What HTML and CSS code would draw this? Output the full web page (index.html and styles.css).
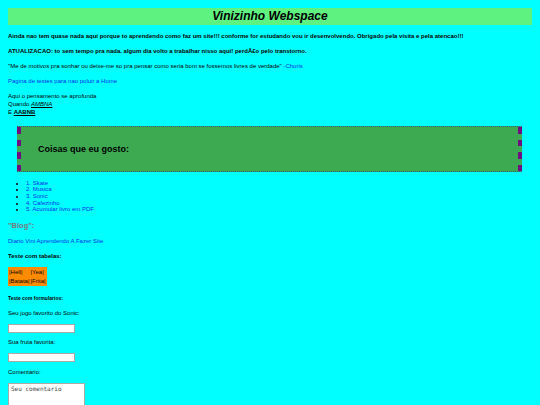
FILE: index.html
```html
<!DOCTYPE html>
<html>
<head>
<meta charset="utf-8">
<title>Vinizinho Webspace</title>
<link rel="stylesheet" href="styles.css">
</head>
<body>
<h1 class="title">Vinizinho Webspace</h1>
<p class="txt"><b>Ainda nao tem quase nada aqui porque to aprendendo como faz um site!!! conforme for estudando vou ir desenvolvendo. Obrigado pela visita e pela atencao!!!</b></p>
<p class="txt"><b>ATUALIZACAO: to sem tempo pra nada. algum dia volto a trabalhar nisso aqui! perdÃ£o pelo transtorno.</b></p>
<p class="txt">"Me de motivos pra sonhar ou deixe-me so pra pensar como seria bom se fossemos livres de verdade" <a class="lnk" href="#">-Choris</a></p>
<p class="txt"><a class="lnk" href="#">Pagina de testes para nao poluir a Home</a></p>
<p class="txt">Aqui o pensamento se aprofunda<br>Quando <i><u>AMBNA</u></i><br>E <b><u>AABNB</u></b></p>
<div class="box"><h2 class="box-title">Coisas que eu gosto:</h2></div>
<ul class="likes">
<li><a class="lnk" href="#">1. Skate</a></li>
<li><a class="lnk" href="#">2. Musica</a></li>
<li><a class="lnk" href="#">3. Sonic</a></li>
<li><a class="lnk" href="#">4. Cafezinho</a></li>
<li><a class="lnk" href="#">5. Acumular livro em PDF</a></li>
</ul>
<h3 class="blog">"Blog":</h3>
<p class="txt"><a class="lnk" href="#">Diario Vini Aprendendo A Fazer Site</a></p>
<p class="txt"><b>Teste com tabelas:</b></p>
<table class="tbl">
<tr><td>|Hell|</td><td>|Yea|</td></tr>
<tr><td>|Batata|</td><td>|Frita|</td></tr>
</table>
<h4 class="form-title">Teste com formularios:</h4>
<form class="frm">
<p class="ftxt first">Seu jogo favorito do Sonic:</p>
<input class="field" type="text">
<p class="ftxt">Sua fruta favorita:</p>
<input class="field" type="text">
<p class="ftxt">Comentario:</p>
<textarea class="area" placeholder="Seu comentario"></textarea>
</form>
</body>
</html>
```
FILE: styles.css
```css
html, body {
  background: #00ffff;
}
body {
  margin: 8px;
  font-family: "Liberation Sans", Arial, sans-serif;
  font-size: 6px;
  line-height: 8.3px;
  color: #000;
}
.title {
  margin: 0;
  background: #5ef380;
  font-size: 12px;
  font-style: italic;
  font-weight: bold;
  line-height: 17px;
  text-align: center;
}
.txt {
  margin: 6.7px 0;
}
.lnk {
  color: #0030f0;
  text-decoration: none;
}
.box {
  margin: 9px 10px 8px 9px;
  background:
    repeating-linear-gradient(to bottom, #6e0e82 0, #6e0e82 6.7px, transparent 6.7px, transparent 12.7px) left top / 4px 100% no-repeat,
    repeating-linear-gradient(to bottom, #6e0e82 0, #6e0e82 6.7px, transparent 6.7px, transparent 12.7px) right top / 4px 100% no-repeat,
    #3daa52;
  border-top: 1.5px dotted #2c5f86;
  border-bottom: 1.5px dotted #2c5f86;
  height: 44px;
  display: flex;
  align-items: center;
  padding-left: 21px;
}
.box-title {
  margin: 0;
  font-size: 9px;
  line-height: 10px;
}
.likes {
  margin: 8px 0;
  padding-left: 18px;
  line-height: 6.67px;
}
.blog {
  margin: 8px 0 0;
  font-size: 7.5px;
  line-height: 9px;
  color: #7a7a7a;
}
.tbl {
  background: #ff8c00;
  border-spacing: 1px;
  margin-top: 6px;
}
.tbl td {
  padding: 0;
  line-height: 8px;
}
.form-title {
  margin: 9px 0 0;
  font-size: 5px;
  line-height: 6px;
}
.frm {
  margin: 0;
}
.ftxt {
  margin: 5.8px 0 6.6px;
}
.ftxt.first {
  margin-top: 8.5px;
}
.field {
  display: block;
  width: 67px;
  height: 8.7px;
  box-sizing: border-box;
  border: 1px solid #a9a9a9;
  padding: 0;
  background: #fff;
}
.area {
  display: block;
  width: 77px;
  height: 40px;
  margin-top: 7px;
  box-sizing: border-box;
  border: 1px solid #a9a9a9;
  padding: 1px 2px;
  font-family: "DejaVu Sans Mono", monospace;
  font-size: 6px;
  background: #fff;
  resize: none;
}
.area::placeholder {
  color: #444;
}
```
